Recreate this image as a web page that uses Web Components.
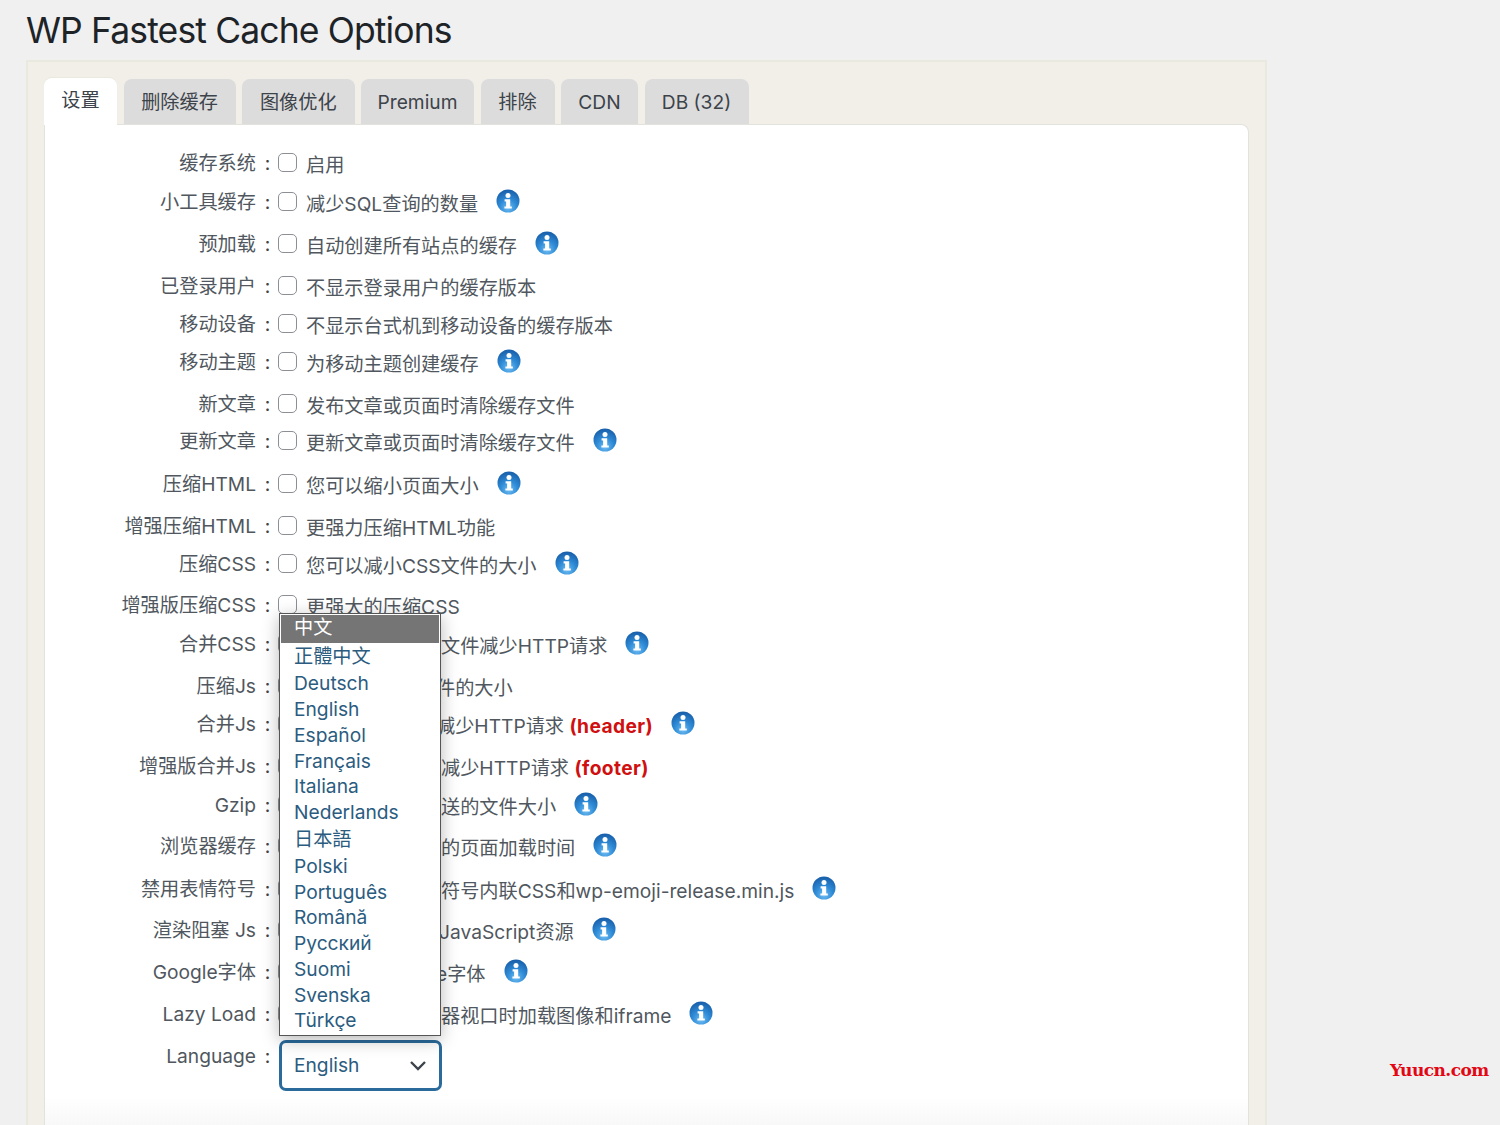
<!DOCTYPE html>
<html lang="zh"><head><meta charset="utf-8"><title>WP Fastest Cache Options</title>
<style>
html,body{margin:0;height:1125px;overflow:hidden;background:#f0f0f1}
body{font-family:Inter,"Noto Sans CJK SC",sans-serif;color:#50575e;position:relative}
</style></head><body>
<wpfc-app>
<wpfc-tabs slot="tabs"></wpfc-tabs>
<wpfc-row h="39" label="缓存系统">启用</wpfc-row>
<wpfc-row h="42" label="小工具缓存" info>减少SQL查询的数量</wpfc-row>
<wpfc-row h="42" label="预加载" info>自动创建所有站点的缓存</wpfc-row>
<wpfc-row h="38" label="已登录用户">不显示登录用户的缓存版本</wpfc-row>
<wpfc-row h="38" label="移动设备">不显示台式机到移动设备的缓存版本</wpfc-row>
<wpfc-row h="42" label="移动主题" info>为移动主题创建缓存</wpfc-row>
<wpfc-row h="37" label="新文章">发布文章或页面时清除缓存文件</wpfc-row>
<wpfc-row h="43" label="更新文章" info>更新文章或页面时清除缓存文件</wpfc-row>
<wpfc-row h="42" label="压缩HTML" info>您可以缩小页面大小</wpfc-row>
<wpfc-row h="38" label="增强压缩HTML">更强力压缩HTML功能</wpfc-row>
<wpfc-row h="41" label="压缩CSS" info>您可以减小CSS文件的大小</wpfc-row>
<wpfc-row h="39" label="增强版压缩CSS">更强大的压缩CSS</wpfc-row>
<wpfc-row h="42" label="合并CSS" covered info>文件减少HTTP请求</wpfc-row>
<wpfc-row h="38" label="压缩Js" covered style="--s:-5px">件的大小</wpfc-row>
<wpfc-row h="42" label="合并Js" covered info style="--s:-5px">减少HTTP请求 <b>(header)</b></wpfc-row>
<wpfc-row h="39" label="增强版合并Js" covered>减少HTTP请求 <b>(footer)</b></wpfc-row>
<wpfc-row h="41" label="Gzip" covered info>送的文件大小</wpfc-row>
<wpfc-row h="43" label="浏览器缓存" covered info>的页面加载时间</wpfc-row>
<wpfc-row h="41" label="禁用表情符号" covered info>符号内联CSS和wp-emoji-release.min.js</wpfc-row>
<wpfc-row h="42" label="渲染阻塞 Js" covered info style="--s:-2px">JavaScript资源</wpfc-row>
<wpfc-row h="42" label="Google字体" covered info style="--s:-5px">e字体</wpfc-row>
<wpfc-row h="42" label="Lazy Load" covered info>器视口时加载图像和iframe</wpfc-row>
<wpfc-row h="60" label="Language" control><wpfc-select></wpfc-select></wpfc-row>
</wpfc-app>
<wpfc-mark>Yuucn.com</wpfc-mark>
<script>
const def=(n,html,extra={})=>customElements.define(n,class extends HTMLElement{
  constructor(){super();this.attachShadow({mode:'open'}).innerHTML=html;}
  connectedCallback(){extra.init&&extra.init.call(this,this.shadowRoot);}
});
def('wpfc-app',`<style>
:host{display:flex;flex-direction:column;box-sizing:border-box;height:1125px;padding:11px 0 0 26px}
h1{margin:0;font:400 35.5px/40px Inter,"Noto Sans CJK SC",sans-serif;color:#1d2327;letter-spacing:-.87px}
.panel{box-sizing:border-box;width:1241px;flex:1;min-height:0;display:flex;flex-direction:column;margin-top:9px;background:#f2efe9;border:2px solid #e9e9df;border-bottom:0;padding:16px 16px 0 16px}
.body{flex:1;min-height:0;background:linear-gradient(#fff calc(100% - 28px),#f8f8f8);border:1px solid #e3e3de;border-bottom:0;border-radius:0 8px 0 0;padding:24px 0 0;margin-top:-1px;box-sizing:border-box}
</style><h1>WP Fastest Cache Options</h1>
<div class="panel"><slot name="tabs"></slot><div class="body"><slot></slot></div></div>`);
def('wpfc-tabs',`<style>
:host{display:flex;gap:6.5px;height:47px;position:relative;z-index:1;font:400 19.2px/1 Inter,"Noto Sans CJK SC",sans-serif;color:#3c434a}
div{box-sizing:border-box;height:45px;margin-top:1px;padding-top:3px;background:#dcdcdc;border-radius:8px 8px 0 0;display:flex;align-items:center;justify-content:center}
.on{background:#fff;height:47px;margin-top:0;padding:0 0 1px;box-shadow:0 -1px 0 #e9e9df;border-radius:8px 8px 0 0}
</style>
<div class="on" style="width:73px">设置</div><div style="width:112px">删除缓存</div><div style="width:112.5px">图像优化</div><div style="width:113px">Premium</div><div style="width:74px">排除</div><div style="width:77px">CDN</div><div style="width:104px">DB (32)</div>`);
def('wpfc-info',`<style>:host{display:inline-block;width:24px;height:26px;flex:none}svg{display:block}</style>
<svg width="24" height="26" viewBox="0 0 24 26"><defs><radialGradient id="g" cx=".5" cy=".8" r=".75"><stop offset="0" stop-color="#6cbcf2"/><stop offset=".5" stop-color="#2f8bd6"/><stop offset="1" stop-color="#1a62ad"/></radialGradient></defs>
<circle cx="12" cy="13" r="11.5" fill="url(#g)"/>
<circle cx="12" cy="7.6" r="2.5" fill="#fff"/><path d="M8.6 11.2h5.6v7.2h1.6v2.2H8.4v-2.2h1.7v-5H8.6z" fill="#fff"/></svg>`);
def('wpfc-row',`<style>
:host{display:grid;grid-template-columns:211px 22px 18px 1fr;align-items:start;font-size:19.2px;line-height:30px;color:#50575e}
.l{text-align:right;margin-top:-1px}
.c{text-align:center;padding-left:1px;margin-top:-1px;color:#3c434a}
.box{box-sizing:border-box;width:19px;height:19px;border:1.5px solid #8c8f94;border-radius:5px;background:#fff;margin-top:4px}
.v{display:flex;align-items:flex-start;margin-left:10px;margin-top:1px;white-space:nowrap}
:host([covered]) .v{margin-left:calc(145px + var(--s,0px))}
::slotted(b){color:#d01010;font-weight:700;letter-spacing:.4px}
wpfc-info{margin-left:18px;margin-top:-1px}
:host([control]) .v{margin:-2px 0 0 1px;grid-column:3/5}
</style><div class="l"></div><div class="c">:</div><div class="box"></div><div class="v"><span><slot></slot></span></div>`,{init(r){
  r.querySelector('.l').textContent=this.getAttribute('label');
  this.style.height=this.getAttribute('h')+'px';
  if(this.hasAttribute('info'))r.querySelector('.v').appendChild(document.createElement('wpfc-info'));
  if(this.hasAttribute('control'))r.querySelector('.box').remove();
}});
def('wpfc-menu',`<style>
:host{display:block;position:absolute;left:-3px;right:-2px;bottom:calc(100% + 7px);box-sizing:border-box;background:#fff;border:1px solid #555;box-shadow:0 4px 16px rgba(0,0,0,.28);padding:1px;font-size:19.2px;color:#2b5c80;z-index:5}
div{padding-left:13px;height:25.75px;line-height:24.5px;white-space:nowrap}
.cjk{height:28px;line-height:27px}
.on{background:#757575;color:#fff;height:28.5px;line-height:24.5px}
</style>
<div class="on">中文</div><div class="cjk">正體中文</div><div>Deutsch</div><div>English</div><div>Español</div><div>Français</div><div>Italiana</div><div>Nederlands</div><div class="cjk">日本語</div><div>Polski</div><div>Português</div><div>Română</div><div>Русский</div><div>Suomi</div><div>Svenska</div><div>Türkçe</div>`);
def('wpfc-select',`<style>
:host{display:block;position:relative;width:163px;height:51px;box-sizing:border-box;border:3px solid #2a6b9c;border-radius:7px;background:#fff;color:#2b5c80;font-size:19.2px;line-height:45px;padding-left:12px}
svg{position:absolute;right:12px;top:17px}
</style>English<svg width="18" height="11" viewBox="0 0 18 11"><path d="M2 2l7 7 7-7" fill="none" stroke="#3c434a" stroke-width="2.4"/></svg><wpfc-menu></wpfc-menu>`);
def('wpfc-mark',`<style>:host{position:absolute;left:1390px;top:1059px;font:700 17px/22px "DejaVu Serif",serif;color:#e30613;letter-spacing:-.55px}</style><slot></slot>`);
</script>
</body></html>
